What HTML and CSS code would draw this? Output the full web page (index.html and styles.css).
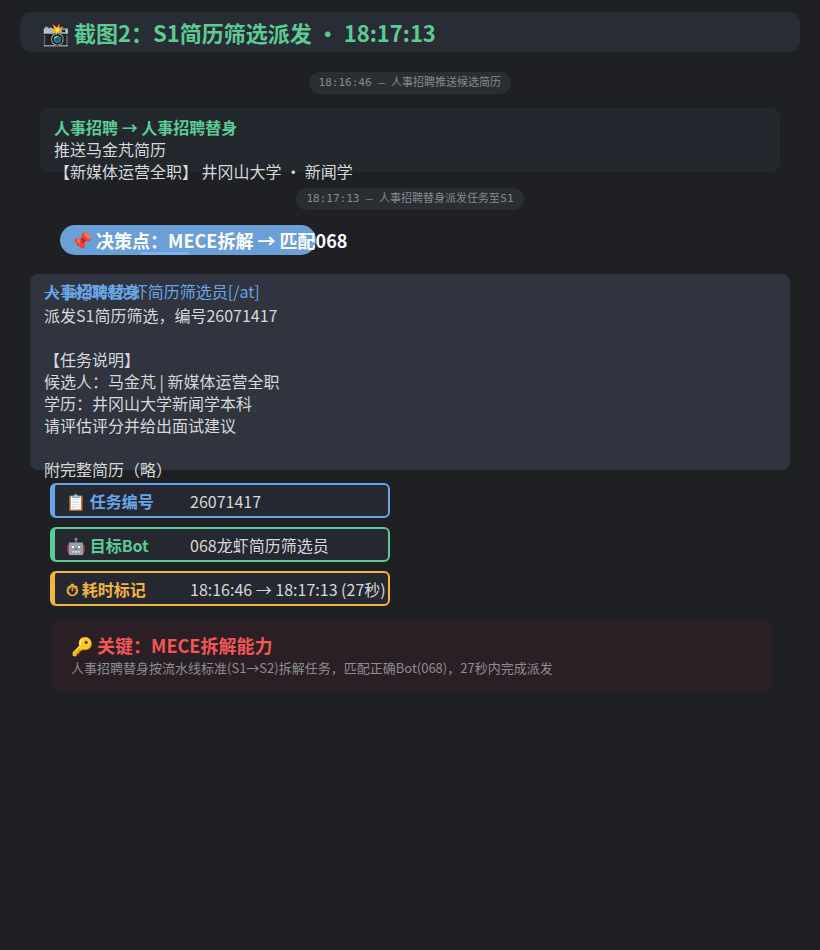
FILE: index.html
```html
<!DOCTYPE html>
<html lang="zh-CN">
<head>
    <meta charset="UTF-8">
    <meta name="viewport" content="width=device-width, initial-scale=1.0">
    <title>截图2：S1简历筛选派发</title>
    <link rel="stylesheet" href="styles.css">
</head>
<body>
    <div class="page">
        <h1 class="title">📸 截图2：S1简历筛选派发 · 18:17:13</h1>

        <div class="stamp">18:16:46 — 人事招聘推送候选简历</div>

        <div class="msg">
            <div class="from green">人事招聘 → 人事招聘替身</div>
            <div class="text">推送马金芃简历<br>【新媒体运营全职】 井冈山大学 · 新闻学</div>
        </div>

        <div class="stamp">18:17:13 — 人事招聘替身派发任务至S1</div>

        <div class="decision">📌 决策点：MECE拆解 → 匹配068</div>

        <div class="msg big">
            <div class="from blue stack"><b>人事招聘替身</b><span>→ [at]068龙虾简历筛选员[/at]</span></div>
            <div class="text">派发S1简历筛选，编号26071417<br><br>【任务说明】<br>候选人：马金芃 | 新媒体运营全职<br>学历：井冈山大学新闻学本科<br>请评估评分并给出面试建议<br><br>附完整简历（略）</div>
        </div>

        <div class="rows">
            <div class="row r-blue"><span class="label">📋 任务编号</span><span class="val">26071417</span></div>
            <div class="row r-green"><span class="label">🤖 目标Bot</span><span class="val">068龙虾简历筛选员</span></div>
            <div class="row r-orange"><span class="label">⏱ 耗时标记</span><span class="val">18:16:46 → 18:17:13 (27秒)</span></div>
        </div>

        <div class="key">
            <div class="key-title">🔑 关键：MECE拆解能力</div>
            <div class="key-desc">人事招聘替身按流水线标准(S1→S2)拆解任务，匹配正确Bot(068)，27秒内完成派发</div>
        </div>
    </div>
</body>
</html>
```

FILE: styles.css
```css
*, *:before, *:after {box-sizing: border-box;}
* {margin: 0; padding: 0;}
html, body {background-color: #1e2023; color: #d6d8db; font-family: 'Noto Sans CJK SC', 'Noto Sans', sans-serif;}
.page {display: flex; flex-direction: column; padding: 12px 20px;}
.title {height: 40px; padding: 0 22px; background: #282c34; border-radius: 10px; color: #5ccb93; font-size: 22px; font-weight: bold; line-height: 40px; white-space: nowrap;}
.stamp {align-self: center; height: 22px; padding: 0 10px; margin-top: 20px; background: #2a2e32; border-radius: 11px; color: #858a90; font-family: 'DejaVu Sans Mono', monospace; font-size: 11px; line-height: 22px; white-space: nowrap;}
.stamp + .msg {margin-top: 14px;}
.msg {height: 64px; margin: 0 20px; padding: 8px 14px; background: #23272e; border-radius: 8px; font-size: 16px; line-height: 22px;}
.msg + .stamp {margin-top: 16px;}
.from {font-weight: bold;}
.green {color: #5ccb93;}
.blue {color: #6aa6e6;}
.text {white-space: nowrap;}
.decision {position: relative; align-self: flex-start; width: 256px; height: 30px; margin: 15px 0 0 40px; padding-left: 10px; background: #6a9fd8; border-radius: 15px; color: #fff; font-size: 18px; font-weight: bold; line-height: 30px; white-space: nowrap;}
.decision::after {content: ''; position: absolute; left: 80px; top: 27px; width: 49px; height: 3px; background: #7db4ee; border-radius: 2px;}
.msg.big {height: 196px; margin: 19px 10px 0; padding: 6px 14px; background: #2f343e;}
.stack {display: grid; margin-bottom: 2px; font-weight: normal; white-space: nowrap;}
.stack > * {grid-area: 1 / 1;}
.stack b {font-weight: bold;}
.rows {display: flex; flex-direction: column; gap: 9px; margin: 13px 0 0 30px; width: 340px;}
.row {display: flex; align-items: center; height: 35px; padding-left: 11px; background: #252831; border: 2px solid; border-left-width: 5px; border-radius: 6px; font-size: 16px; white-space: nowrap;}
.label {width: 124px; font-weight: bold;}
.val {color: #d6d8db;}
.r-blue {border-color: #6aa6e6; color: #6aa6e6;}
.r-green {border-color: #5ccb93; color: #5ccb93;}
.r-orange {border-color: #f2b540; color: #f2b540;}
.key {margin: 13px 28px 0 31px; padding: 14px 20px 12px; background: #2a1f24; border-radius: 10px;}
.key-title {color: #f25656; font-size: 18px; font-weight: bold; line-height: 24px;}
.key-desc {color: #8b8e93; font-size: 13px; line-height: 22px;}
```
